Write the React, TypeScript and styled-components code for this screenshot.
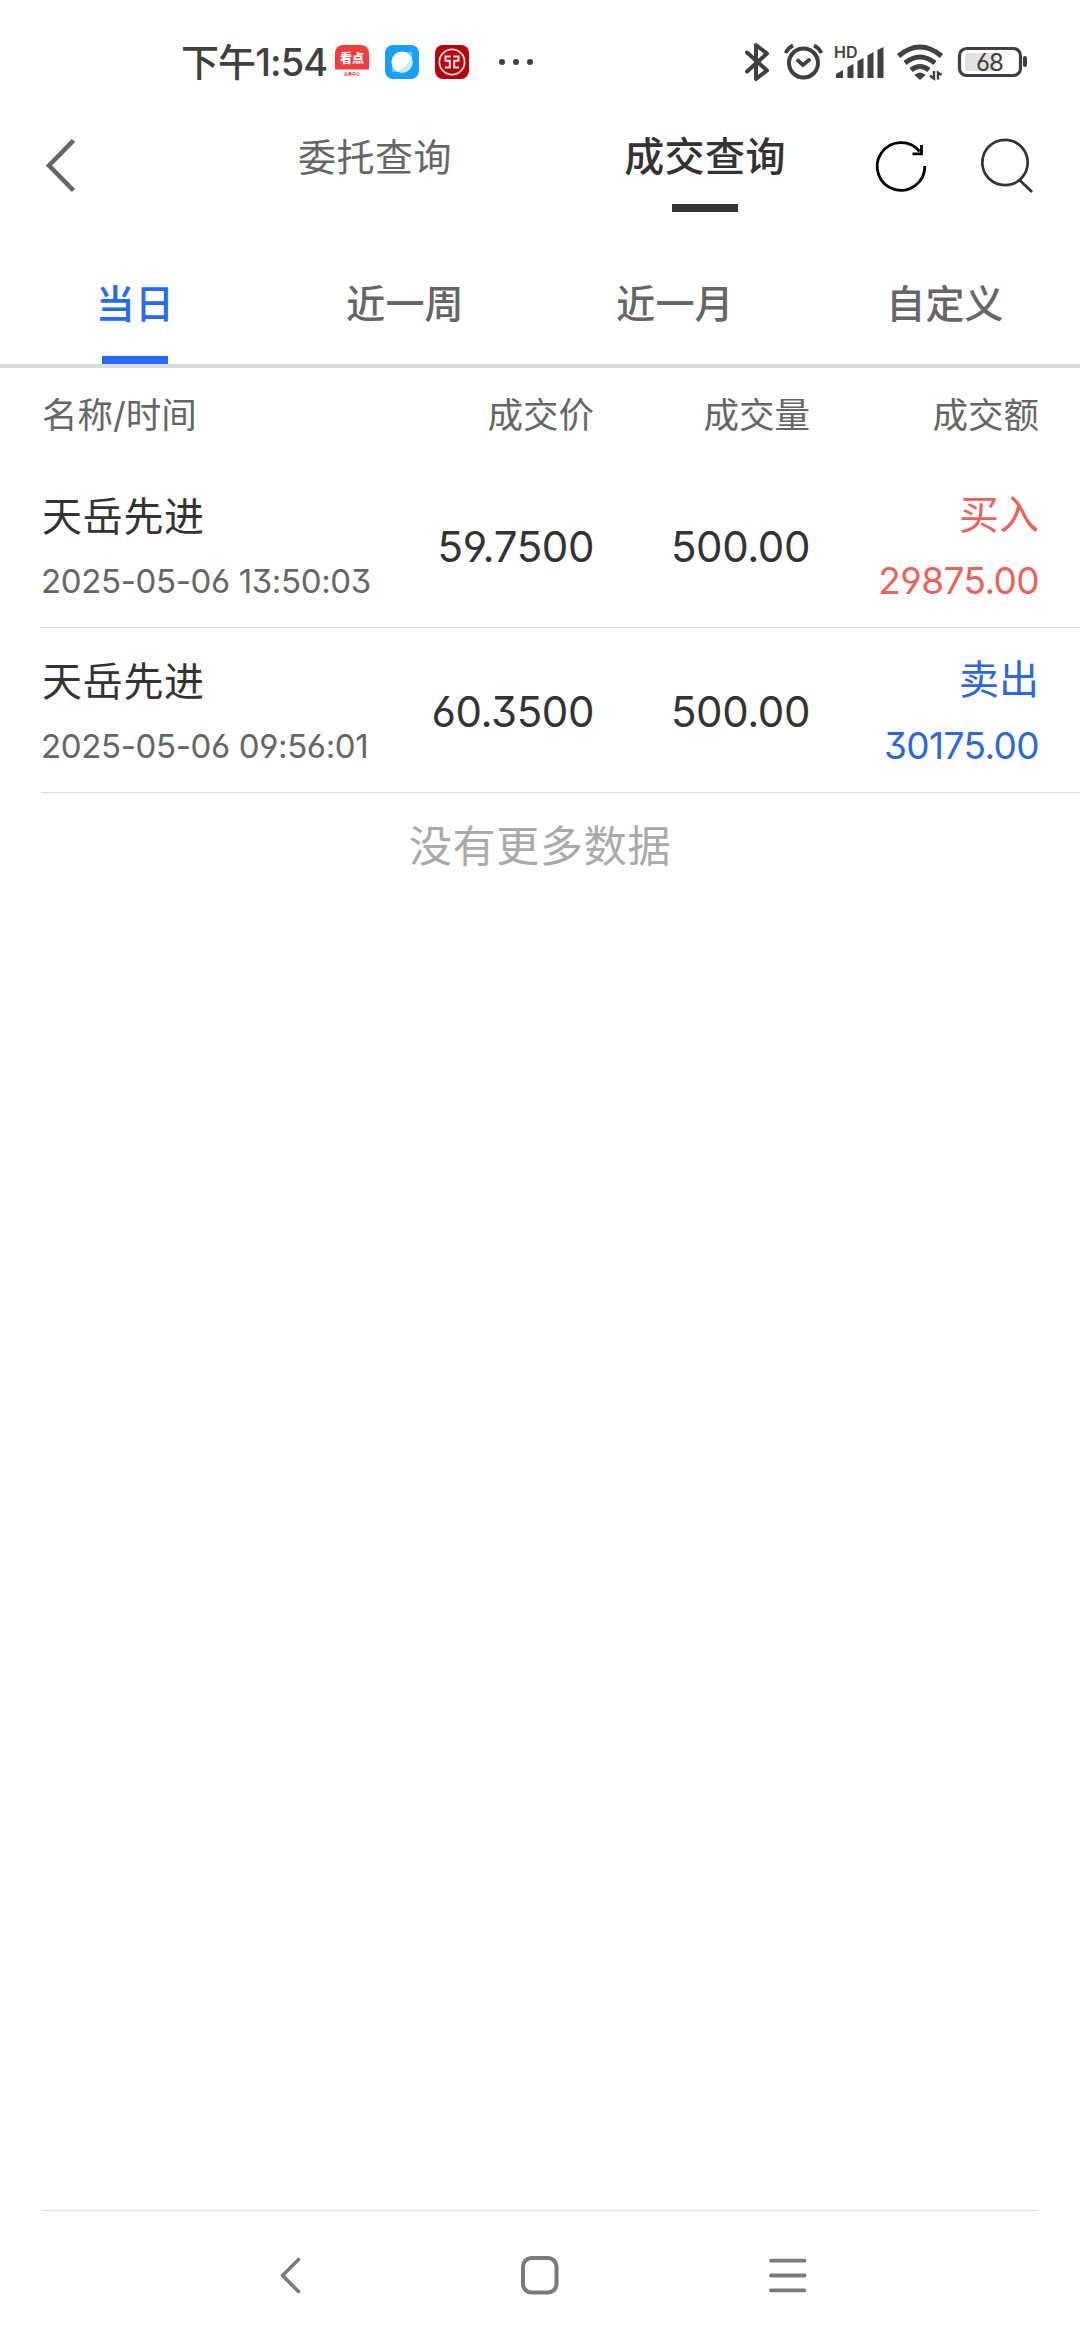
import React from 'react';
import styled, { createGlobalStyle } from 'styled-components';

const GlobalStyle = createGlobalStyle`
  *, *::before, *::after { box-sizing: border-box; }
  body {
    margin: 0;
    background: #fefefe;
    font-family: Inter, 'Noto Sans CJK SC', sans-serif;
    font-feature-settings: 'cv03' 1, 'cv04' 1, 'cv09' 1, 'calt' 0;
  }
`;

const Screen = styled.div`
  display: flex;
  flex-direction: column;
  width: 1080px;
  height: 2340px;
  overflow: hidden;
  background: #fefefe;
`;

const StatusBar = styled.header`
  display: flex;
  align-items: center;
  flex: none;
  height: 124px;
  padding: 0 50px 0 181px;
  color: #404040;
`;

const Clock = styled.time`
  width: 154px;
  font-size: 38px;
  font-weight: 500;
  line-height: 50px;
  white-space: nowrap;
  letter-spacing: -0.9px;
`;

const AppIcons = styled.div`
  display: flex;
  align-items: center;
  gap: 16px;
`;

const NewsBadge = styled.div`
  display: flex;
  flex-direction: column;
  align-items: center;
  width: 34px;
  height: 34px;
  border-radius: 8px;
  overflow: hidden;
  background: linear-gradient(#f23d3f 0 24px, #fff 25px);
  color: #fff;
  font-size: 12px;
  font-weight: 900;
  line-height: 28px;
`;

const NewsCaption = styled.span`
  color: #d33;
  font-size: 4px;
  font-weight: 700;
  line-height: 4px;
`;

const Spacer = styled.div`
  flex: 1;
`;

const StatusIcons = styled.div`
  display: flex;
  align-items: center;
`;

const NavBar = styled.nav`
  display: flex;
  flex: none;
  height: 120px;
`;

const IconButton = styled.button<{ $width: number }>`
  display: flex;
  width: ${(p) => p.$width}px;
  height: 84px;
  padding: 0;
  border: 0;
  background: none;
`;

const NavTab = styled.button<{ $active?: boolean }>`
  display: flex;
  flex-direction: column;
  align-items: center;
  width: 330px;
  padding: 0;
  border: 0;
  background: none;
  color: ${(p) => (p.$active ? '#333' : '#666')};
  font-family: inherit;
  font-size: ${(p) => (p.$active ? 40 : 38)}px;
  font-weight: ${(p) => (p.$active ? 500 : 400)};
  letter-spacing: ${(p) => (p.$active ? 0.4 : 0.5)}px;
  line-height: 66px;
`;

const Underline = styled.span<{ $color: string }>`
  width: 66px;
  height: 8px;
  background: ${(p) => p.$color};
`;

const NavUnderline = styled(Underline)`
  margin-top: 14px;
`;

const RangeTabs = styled.div`
  display: grid;
  flex: none;
  grid-template-columns: repeat(4, 1fr);
  height: 124px;
  border-bottom: 4px solid #dbdbdb;
`;

const RangeTab = styled.button<{ $active?: boolean }>`
  display: flex;
  flex-direction: column;
  align-items: center;
  justify-content: space-between;
  padding: 28px 0 0;
  border: 0;
  background: none;
  color: ${(p) => (p.$active ? '#246bf0' : '#666')};
  font-family: inherit;
  font-size: 39px;
  font-weight: 500;
  letter-spacing: 0.2px;
  line-height: 64px;
`;

const Columns = styled.div`
  display: grid;
  grid-template-columns: 350px 202px 216px 229px;
  padding-right: 41px;
`;

const HeadRow = styled(Columns)`
  flex: none;
  height: 95px;
  padding-left: 42px;
  color: #666;
  font-size: 35.5px;
  line-height: 95px;
`;

const HeadCell = styled.span<{ $right?: boolean }>`
  text-align: ${(p) => (p.$right ? 'right' : 'left')};
`;

const TradeRow = styled(Columns)`
  flex: none;
  height: 165px;
  margin-left: 41px;
  padding-left: 1px;
  border-bottom: 1px solid #dadada;
`;

const Stack = styled.div<{ $right?: boolean }>`
  display: flex;
  flex-direction: column;
  align-items: ${(p) => (p.$right ? 'flex-end' : 'flex-start')};
  padding-top: 23px;
  white-space: nowrap;
`;

const StockName = styled.span`
  padding-top: 1px;
  color: #333;
  font-size: 40px;
  line-height: 60px;
  letter-spacing: 0.7px;
`;

const TradeTime = styled.span`
  margin-left: -1px;
  color: #666;
  font-size: 33px;
  line-height: 68px;
  letter-spacing: -0.36px;
`;

const Figure = styled.span`
  color: #333;
  font-size: 42px;
  line-height: 168px;
  letter-spacing: -0.4px;
  text-align: right;
`;

const Side = styled.span<{ $color: string }>`
  color: ${(p) => p.$color};
  font-size: 40px;
  line-height: 58px;
`;

const Amount = styled.span<{ $color: string }>`
  color: ${(p) => p.$color};
  font-size: 37px;
  line-height: 74px;
  letter-spacing: -0.6px;
`;

const EndNote = styled.p`
  flex: 1;
  margin: 0;
  padding-top: 23px;
  color: #aaa;
  font-size: 43px;
  line-height: 60px;
  letter-spacing: 0.7px;
  text-align: center;
`;

const BottomRule = styled.hr`
  flex: none;
  width: 996px;
  height: 1px;
  margin: 0 auto;
  border: 0;
  background: #e4e4e4;
`;

const SystemNav = styled.footer`
  display: flex;
  flex: none;
  justify-content: space-between;
  height: 129px;
  padding: 44px 272px 0;
`;

const BUY = '#e8645c';
const SELL = '#2e68d8';

const trades = [
  { name: '天岳先进', time: '2025-05-06 13:50:03', price: '59.7500', volume: '500.00', side: '买入', amount: '29875.00', color: BUY },
  { name: '天岳先进', time: '2025-05-06 09:56:01', price: '60.3500', volume: '500.00', side: '卖出', amount: '30175.00', color: SELL },
];

const BrowserIcon = () => (
  <svg width="34" height="34" viewBox="0 0 34 34">
    <rect width="34" height="34" rx="8" fill="#189ffc" />
    <path d="M18 7H27V16ZM7 18V27H16Z" fill="#6cc4ff" />
    <circle cx="17" cy="17" r="10.5" fill="#fff" />
    <path d="M26.500 12.500Q22 22 12.500 26.500A10.500 10.500 0 0 0 26.500 12.500Z" fill="#cfe9ff" />
  </svg>
);

const BankIcon = () => (
  <svg width="34" height="34" viewBox="0 0 34 34" fill="none" stroke="#fbe4e4">
    <rect width="34" height="34" rx="8" fill="#b5040f" stroke="none" />
    <circle cx="17" cy="17" r="12.600" strokeWidth="1.700" />
    <path d="M15.800 11.500H10.500V15.800H14.800V22.500H10M18.200 11.500H23.500V15.800H19.200V22.500H24" strokeWidth="2" />
  </svg>
);

const StatusGlyphs = () => (
  <svg width="290" height="44" viewBox="740 40 290 44" fill="none" stroke="#404040">
    <path d="M747 52.500L767 70.500L756 79V45L767 53.500L747 71.500" strokeWidth="4" strokeLinejoin="round" strokeLinecap="round" />
    <circle cx="803.500" cy="63" r="14.500" strokeWidth="4" />
    <path d="M798 60.500L803 65L809 60" strokeWidth="3.800" strokeLinecap="round" />
    <path d="M785.500 53Q788 48 793 45.500M821.500 53Q819 48 814 45.500" strokeWidth="3.800" />
    <path d="M836 78V74L843 70V78ZM847.500 78V67L853.500 64V78ZM857.500 78V61L863.500 58V78ZM867.500 78V55.500L873.500 52V78ZM877.500 78V50L883.500 47V78Z" fill="#404040" stroke="none" />
    <path d="M898.500 56Q920 38 941.500 56M905 63Q920 51 935 63M911 70Q920 63 929 70" strokeWidth="5" />
    <path d="M914.500 75Q920 70 925.500 75L920 80Z" fill="#404040" stroke="none" />
    <path d="M934 71V78.500L930 75.500M938 79.500V72.500L941.500 75" strokeWidth="2.400" />
    <rect x="965" y="53" width="31" height="18" rx="3" fill="#e2e2e2" stroke="none" />
    <rect x="959.500" y="48.500" width="61" height="27" rx="7" strokeWidth="3.200" />
    <path d="M1025 58V65" strokeWidth="4" strokeLinecap="round" />
    <text x="834" y="58" fill="#404040" stroke="none" fontSize="16" fontWeight="600">HD</text>
    <text x="989.500" y="70.700" fill="#404040" stroke="none" fontSize="24" fontWeight="400" letterSpacing="-1" textAnchor="middle">68</text>
  </svg>
);

export default function App() {
  return (
    <>
      <GlobalStyle />
      <Screen>
        <StatusBar>
          <Clock>下午1:54</Clock>
          <AppIcons>
            <NewsBadge>
              看点
              <NewsCaption>头条中心</NewsCaption>
            </NewsBadge>
            <BrowserIcon />
            <BankIcon />
            <svg width="66" height="34" viewBox="0 0 66 34" fill="#404040">
              <circle cx="17" cy="17" r="3" />
              <circle cx="31" cy="17" r="3" />
              <circle cx="45" cy="17" r="3" />
            </svg>
          </AppIcons>
          <Spacer />
          <StatusIcons>
            <StatusGlyphs />
          </StatusIcons>
        </StatusBar>

        <NavBar>
          <IconButton $width={210} aria-label="返回">
            <svg width="90" height="84" viewBox="0 124 90 84" fill="none" stroke="#666" strokeWidth="4.600">
              <path d="M73.500 140.500L49 165.500L73.500 190.500" />
            </svg>
          </IconButton>
          <NavTab>委托查询</NavTab>
          <NavTab $active>
            成交查询
            <NavUnderline $color="#333" />
          </NavTab>
          <IconButton $width={90} aria-label="刷新">
            <svg width="90" height="84" viewBox="870 124 90 84" fill="none" stroke="#000" strokeWidth="2.800">
              <path d="M924.800 166A23.800 23.800 0 1 1 919.500 151.500" />
              <path d="M921.500 145V153.800H912.500" />
            </svg>
          </IconButton>
          <IconButton $width={90} aria-label="搜索">
            <svg width="90" height="84" viewBox="959.500 124 90 84" fill="none" stroke="#333" strokeWidth="2.700">
              <circle cx="1004.500" cy="162.500" r="22.700" />
              <path d="M1019 180L1031.500 192" />
            </svg>
          </IconButton>
        </NavBar>

        <RangeTabs>
          <RangeTab $active>
            当日
            <Underline $color="#246bff" />
          </RangeTab>
          <RangeTab>近一周</RangeTab>
          <RangeTab>近一月</RangeTab>
          <RangeTab>自定义</RangeTab>
        </RangeTabs>

        <HeadRow>
          <HeadCell>名称/时间</HeadCell>
          <HeadCell $right>成交价</HeadCell>
          <HeadCell $right>成交量</HeadCell>
          <HeadCell $right>成交额</HeadCell>
        </HeadRow>
        {trades.map((t) => (
          <TradeRow key={t.time}>
            <Stack>
              <StockName>{t.name}</StockName>
              <TradeTime>{t.time}</TradeTime>
            </Stack>
            <Figure>{t.price}</Figure>
            <Figure>{t.volume}</Figure>
            <Stack $right>
              <Side $color={t.color}>{t.side}</Side>
              <Amount $color={t.color}>{t.amount}</Amount>
            </Stack>
          </TradeRow>
        ))}
        <EndNote>没有更多数据</EndNote>

        <BottomRule />
        <SystemNav>
          <svg width="40" height="42" viewBox="272 2255 40 42" fill="none" stroke="#7b7b7b" strokeWidth="3.600" strokeLinecap="round" strokeLinejoin="round">
            <path d="M298.500 2259.500L282.500 2275.500L298.500 2291.500" />
          </svg>
          <svg width="40" height="42" viewBox="520 2255 40 42" fill="none" stroke="#7b7b7b" strokeWidth="4">
            <rect x="523" y="2258" width="33.500" height="34.500" rx="8.500" />
          </svg>
          <svg width="40" height="42" viewBox="768 2255 40 42" fill="none" stroke="#7b7b7b" strokeWidth="3.800" strokeLinecap="round">
            <path d="M771 2260.700H804.500M771 2275.500H804.500M771 2290.300H804.500" />
          </svg>
        </SystemNav>
      </Screen>
    </>
  );
}
